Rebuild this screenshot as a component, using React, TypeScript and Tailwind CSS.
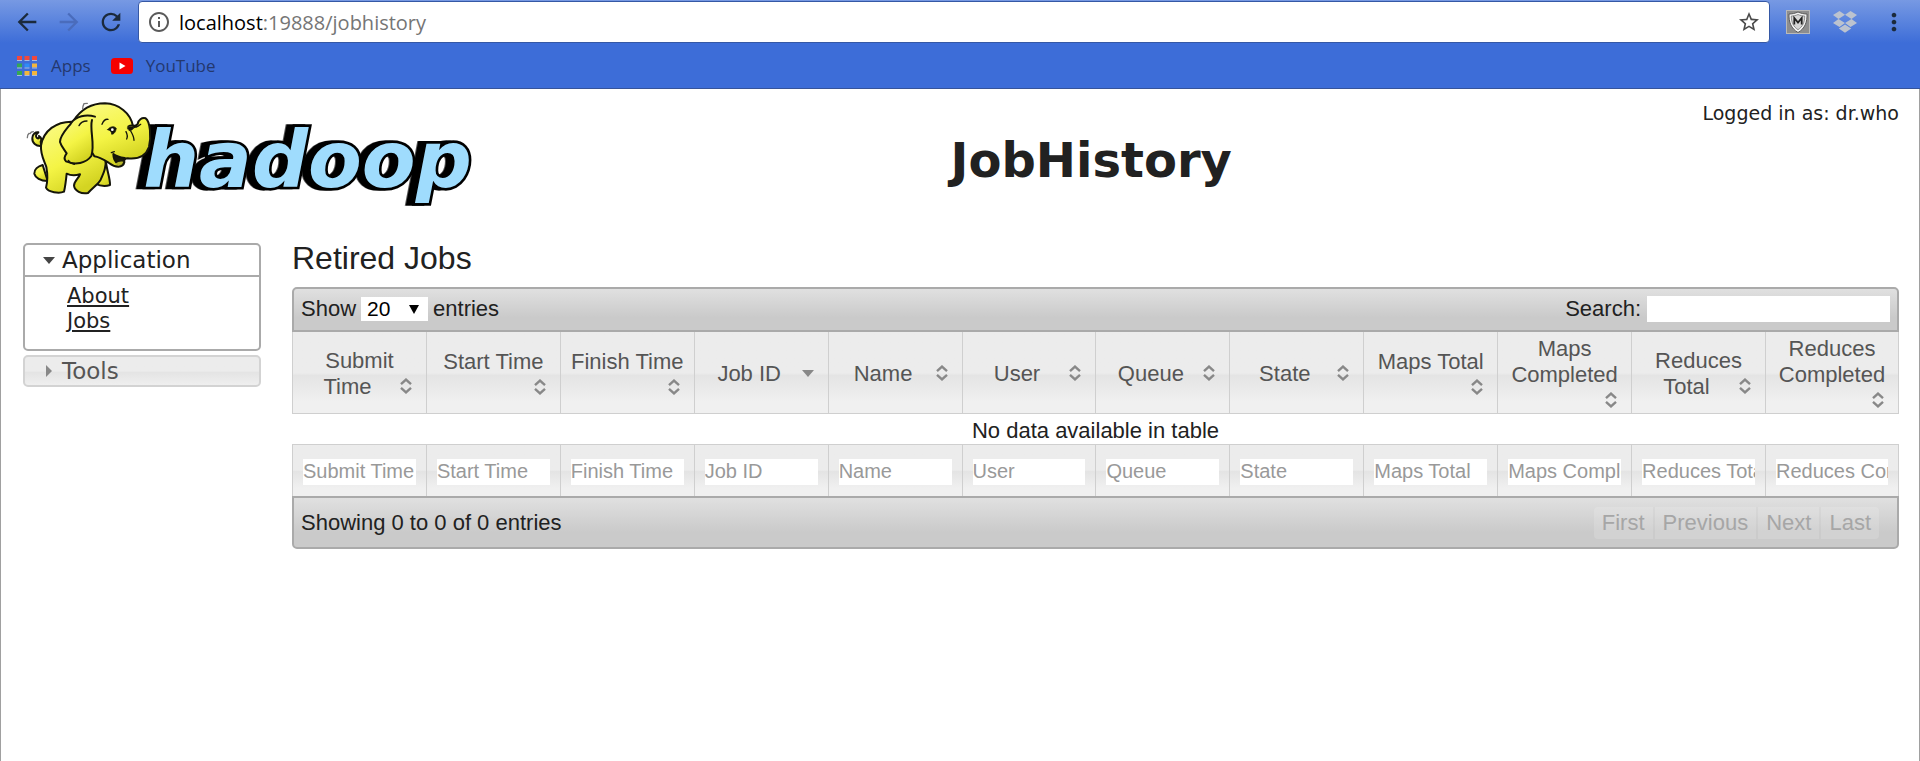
import type { ReactNode } from "react";
import {
  MdArrowBack,
  MdArrowForward,
  MdInfoOutline,
  MdMoreVert,
  MdRefresh,
  MdStarBorder,
} from "react-icons/md";

const COLUMNS = [
  "Submit Time",
  "Start Time",
  "Finish Time",
  "Job ID",
  "Name",
  "User",
  "Queue",
  "State",
  "Maps Total",
  "Maps Completed",
  "Reduces Total",
  "Reduces Completed",
];

const SORTED = "Job ID";

const APP_TILES = [
  "#f0483e", "#f0483e", "#f0483e",
  "#35a853", "#2f8cf5", "#f4b63c",
  "#35a853", "#f4b63c", "#f4b63c",
];

function AppsIcon() {
  return (
    <svg viewBox="0 0 20 20" className="size-5" aria-hidden="true">
      {APP_TILES.map((fill, i) => (
        <g key={i}>
          <rect x={(i % 3) * 7.5} y={Math.floor(i / 3) * 7.5} width="5" height="4" fill={fill} />
          <rect x={(i % 3) * 7.5} y={Math.floor(i / 3) * 7.5 + 4} width="5" height="1" fill="#a9bbe0" />
        </g>
      ))}
    </svg>
  );
}

function YouTubeIcon() {
  return (
    <svg viewBox="0 0 22 16" className="h-4 w-[22px]" aria-hidden="true">
      <rect width="22" height="16" rx="3.5" fill="#f60000" />
      <path d="M8.5 4.6v6.8L14.5 8z" fill="#fff" />
    </svg>
  );
}

function ShieldIcon() {
  return (
    <svg viewBox="0 0 24 24" className="size-6" aria-hidden="true">
      <rect x="0.5" y="0.5" width="23" height="23" fill="#8d8d8d" stroke="#b9b9b9" />
      <path d="M3 4c3 0 6-.6 9-2 3 1.400 6 2 9 2 .3 8-2 14.500-9 18.500C5 18.500 2.700 12 3 4z" fill="#f4f4f4" stroke="#5c5c5c" />
      <path d="M5.300 6c2.400 0 4.600-.5 6.700-1.500C14.100 5.500 16.300 6 18.700 6c0 6-1.800 10.500-6.700 13.700C7.100 16.500 5.300 12 5.300 6z" fill="#d6d6d6" stroke="#777" strokeWidth="0.8" />
      <path d="M8.300 14.500V8l3.700 4.500L15.700 8v6.500" fill="none" stroke="#222" strokeWidth="1.800" />
    </svg>
  );
}

function DropboxIcon() {
  return (
    <svg viewBox="0 0 24 22" className="h-[22px] w-6" fill="#bcc3cf" aria-hidden="true">
      <path d="M6.500 0 12 3.800 5.500 8 0 4zM17.500 0 24 4 18.500 8 12 3.800zM0 12l5.500-4L12 12l-5.500 4zM18.500 8 24 12l-6.500 4L12 12zM5.800 17.600 12 13.600l6.200 4L12 21.800z" />
    </svg>
  );
}

function IconButton({ label, dim, children }: { label: string; dim?: boolean; children: ReactNode }) {
  return (
    <button
      type="button"
      aria-label={label}
      className={dim ? "shrink-0 text-[#4a6cbc]" : "shrink-0 text-[#1b2a3c]"}
    >
      {children}
    </button>
  );
}

function BrowserBar() {
  return (
    <div className="border-b border-[#36549a] bg-[#3d6dd8] font-['Open_Sans',sans-serif]">
      <div className="flex items-center bg-linear-to-b from-[#7799e3] to-[#3d6dd8] px-3 pt-px">
        <div className="flex w-[126px] items-center gap-[14px] pl-px">
          <IconButton label="Back"><MdArrowBack className="size-7" /></IconButton>
          <IconButton label="Forward" dim><MdArrowForward className="size-7" /></IconButton>
          <IconButton label="Reload"><MdRefresh className="size-7" /></IconButton>
        </div>
        <div className="flex h-[42px] flex-1 items-center rounded-[4px] border border-[#3558a5] bg-white pr-2 pl-2">
          <MdInfoOutline className="size-6 shrink-0 text-[#5a5a5a]" />
          <div className="flex-1 pt-px pl-2 text-xl leading-6 text-[#757575]">
            <span className="text-black">localhost</span>:19888/jobhistory
          </div>
          <button type="button" aria-label="Bookmark this page" className="text-[#4a4a4a]">
            <MdStarBorder className="size-6" />
          </button>
        </div>
        <div className="flex items-center gap-[23px] pl-4">
          <button type="button" aria-label="Site safety"><ShieldIcon /></button>
          <button type="button" aria-label="Dropbox"><DropboxIcon /></button>
          <IconButton label="Menu"><MdMoreVert className="size-7" /></IconButton>
        </div>
      </div>
      <div className="flex h-[45px] items-center gap-5 pl-[17px] text-[17px] text-[#24386e]">
        <a href="#apps" className="flex items-center gap-[14px]"><AppsIcon />Apps</a>
        <a href="#youtube" className="flex items-center gap-[13px]"><YouTubeIcon />YouTube</a>
      </div>
    </div>
  );
}

function HadoopLogo() {
  return (
    <svg viewBox="69 42 1347 375" className="h-[125px] w-[449px] shrink-0" role="img" aria-label="hadoop">
      <defs>
        <linearGradient id="hide" x1="0" y1="0" x2="0.5" y2="1">
          <stop offset="0" stopColor="#fbfb8a" />
          <stop offset="0.6" stopColor="#f4f445" />
          <stop offset="1" stopColor="#d4d422" />
        </linearGradient>
      </defs>
      <text
        x="430"
        y="306"
        fontSize="235"
        fill="#9fdcfd"
        stroke="#000"
        strokeWidth="16"
        strokeLinejoin="miter"
        paintOrder="stroke"
        className="font-['DejaVu_Sans'] font-bold italic drop-shadow-[-20px_0_0_#000]"
      >
        hadoop
      </text>
      <g fill="url(#hide)" stroke="#15150a" strokeWidth="6" strokeLinejoin="round" strokeLinecap="round">
        <path d="M124 183c-16 2-28-10-27-24 1-12 9-18 18-17-8 6-9 12-4 17 5 3 8-1 6-6 7 5 8 12 5 17z" />
        <path d="M298 238l20-8c2 26 13 50 12 70-14 5-30 3-44-4z" />
        <path d="M128 240c-14 4-26 14-25 26 3 12 18 22 40 22z" />
        <path d="M214 110c-44 0-84 26-91 72-2 26 8 42 16 64 4 22 4 44-1 62 6 14 40 18 54 12 4-16 6-34 8-54 12 6 26 6 40 2-4 12-18 20-18 34 2 16 22 26 42 22 14-16 30-26 38-40 10-22 18-40 14-64L290 120z" />
        <path d="M220 108c22-34 56-53 95-53 42 2 76 28 84 68 6 0 12-2 14-6 2-12 12-20 24-17 14 10 17 56 10 86-10 28-36 37-64 34-8 0-12 4-10 12-4 18-28 16-46 2-16-10-28-18-44-20z" />
        <path d="M285 95c-26-8-58-2-72 20-14 18-34 38-33 56 4 14 12 22 20 34-8 10-8 18-2 24 28 12 60 6 76-16 12-36-6-78 2-108" />
        <path d="M340 207c8 6 20 10 34 12-2 12-10 18-20 17-10-6-14-18-14-29z" fill="#1a1a08" />
        <path d="M346 236c8-6 16-8 24-6-4 10-14 14-24 6z" fill="#b8b82a" stroke="none" />
        <path d="M334 203l9-3M306 118c4-10 12-16 18-15M384 124c8-5 20-4 26 2M378 140c4 8 6 14 2 22M392 138c6 10 10 18 10 28M402 128c8 0 14-4 20-10M237 122c4-8 14-14 24-14M205 226c4 8 10 10 18 12" fill="none" strokeWidth="4" />
        <path d="M323 134c6-10 20-12 26-4-2 12-8 18-14 18 0-8-4-12-12-14z" fill="#15150a" strokeWidth="2" />
        <path d="M382 128c6-5 14-5 20 0-4 6-10 10-14 9z" fill="#15150a" strokeWidth="2" />
        <circle cx="337" cy="134" r="4" fill="#fff" stroke="none" />
        <path d="M248 72c0-6 2-12 4-16l10-1M82 158c0-6 2-11 5-13M90 146c2-4 6-6 10-6" fill="none" stroke="#777" strokeWidth="4" />
      </g>
    </svg>
  );
}

function SortIcon({ active }: { active: boolean }) {
  return (
    <span className="float-right flex h-6 w-6 items-center justify-center text-[#888]">
      {active ? (
        <svg viewBox="0 0 12 7" className="h-[7px] w-3" aria-hidden="true">
          <path d="M0 0h12L6 7z" fill="currentColor" />
        </svg>
      ) : (
        <svg viewBox="0 0 12 16" className="h-4 w-3" aria-hidden="true">
          <path d="M1 6.200 6 1.600l5 4.600M1 9.800l5 4.600 5-4.600" fill="none" stroke="currentColor" strokeWidth="2.400" />
        </svg>
      )}
    </span>
  );
}

function Sidebar() {
  return (
    <nav className="w-[238px] shrink-0 font-['DejaVu_Sans',sans-serif] text-[#212121]">
      <section className="rounded-[5px] border-2 border-[#aaa]">
        <button
          type="button"
          aria-expanded="true"
          className="flex h-8 w-full items-center gap-[7px] border-b-2 border-[#aaa] pl-[18px] text-[23px] leading-[30px]"
        >
          <svg viewBox="0 0 12 7" className="h-[7px] w-3" aria-hidden="true">
            <path d="M0 0h12L6 7z" fill="#454545" />
          </svg>
          Application
        </button>
        <ul className="pt-[7px] pb-[15px] pl-[42px] text-[21px] leading-[25px]">
          <li><a href="#about" className="underline decoration-2 underline-offset-2">About</a></li>
          <li><a href="#jobs" className="underline decoration-2 underline-offset-2">Jobs</a></li>
        </ul>
      </section>
      <button
        type="button"
        aria-expanded="false"
        className="mt-1 flex h-8 w-full items-center gap-[7px] rounded-[5px] border-2 border-[#d3d3d3] bg-linear-to-b from-[#ececec] from-50% via-[#e4e4e4] via-55% to-[#efefef] pl-[18px] text-[23px] leading-[28px] text-[#555]"
      >
        <svg viewBox="0 0 12 12" className="size-3" aria-hidden="true">
          <path d="M3 0v12l6-6z" fill="#888" />
        </svg>
        Tools
      </button>
    </nav>
  );
}

function JobsTable() {
  return (
    <main className="min-w-0 flex-1 font-['Liberation_Sans',sans-serif] text-[22px] leading-[26px] text-[#212121]">
      <h2 className="mb-[14px] text-[32px] leading-[30px]">Retired Jobs</h2>
      <div className="flex items-center justify-between rounded-t-[5px] border-2 border-[#aaa] bg-linear-to-b from-[#e0e0e0] to-[#cacaca] to-70% px-[7px] pb-[2px]">
        <label className="flex h-[39px] items-center gap-[5px]">
          Show
          <span className="relative flex">
            <select defaultValue="20" className="h-6 w-[67px] appearance-none bg-white pl-[6px] text-[21px] leading-6 text-black">
              <option>20</option>
              <option>40</option>
              <option>60</option>
              <option>80</option>
              <option>100</option>
            </select>
            <svg viewBox="0 0 10 9" className="pointer-events-none absolute top-2 right-[9px] h-[9px] w-[10px]" aria-hidden="true">
              <path d="M0 0h10L5 9z" fill="#000" />
            </svg>
          </span>
          entries
        </label>
        <label className="flex items-center gap-[6px]">
          Search:
          <input type="search" className="h-[26px] w-[243px] appearance-none bg-white" />
        </label>
      </div>
      <table className="w-full table-fixed border-separate border-spacing-0 text-center">
        <thead>
          <tr className="h-[82px] bg-linear-to-b from-[#ececec] from-50% via-[#e4e4e4] via-53% to-[#f0f0f0] to-85%">
            {COLUMNS.map((name) => (
              <th key={name} scope="col" className="border-b border-l border-[#cfcfcf] px-2 pt-[3px] pb-0 font-normal text-[#555] last:border-r">
                <div className="flow-root">
                  {name}
                  <SortIcon active={name === SORTED} />
                </div>
              </th>
            ))}
          </tr>
        </thead>
        <tbody>
          <tr className="h-[30px]">
            <td colSpan={COLUMNS.length} className="px-0 pt-1 pb-0">
              No data available in table
            </td>
          </tr>
        </tbody>
        <tfoot>
          <tr className="h-[52px] bg-linear-to-b from-[#ececec] from-50% via-[#e4e4e4] via-53% to-[#f0f0f0] to-85%">
            {COLUMNS.map((name) => (
              <th key={name} className="border-t border-l border-[#cfcfcf] px-[10px] pt-[2px] pb-0 font-normal last:border-r">
                <input
                  type="text"
                  aria-label={name}
                  placeholder={name}
                  className="block h-[26px] w-full bg-white text-xl leading-6 placeholder:text-[#999]"
                />
              </th>
            ))}
          </tr>
        </tfoot>
      </table>
      <div className="flex h-[53px] items-center justify-between rounded-b-[5px] border-2 border-[#aaa] bg-linear-to-b from-[#e0e0e0] to-[#cacaca] to-70% pr-[18px] pl-[7px]">
        <p>Showing 0 to 0 of 0 entries</p>
        <div className="flex divide-x-2 divide-black/3 rounded-[4px] bg-white/15 text-[#a6a6a6]">
          {["First", "Previous", "Next", "Last"].map((name) => (
            <button key={name} type="button" disabled className="h-8 px-2">
              {name}
            </button>
          ))}
        </div>
      </div>
    </main>
  );
}

export default function App() {
  return (
    <div className="flex min-h-screen flex-col bg-white">
      <BrowserBar />
      <div className="flex-1 border-x border-[#a0a0a0] pr-5 pl-[22px]">
        <header className="flex h-[154px] items-start pt-[10px] font-['DejaVu_Sans',sans-serif] text-[#212121]">
          <HadoopLogo />
          <h1 className="flex-1 pt-[31px] pl-2 text-center text-5xl leading-[60px] font-bold">JobHistory</h1>
          <p className="text-[19px] leading-7">Logged in as: dr.who</p>
        </header>
        <div className="flex items-start gap-[31px]">
          <Sidebar />
          <JobsTable />
        </div>
      </div>
    </div>
  );
}
